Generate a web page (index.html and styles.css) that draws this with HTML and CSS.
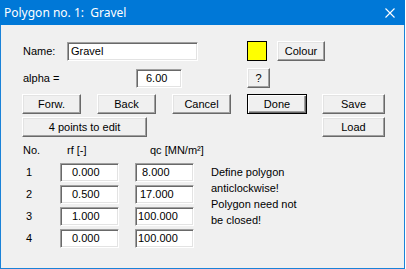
FILE: index.html
```html
<!DOCTYPE html>
<html lang="en">
<head>
<meta charset="UTF-8" />
<title>Polygon no. 1: Gravel</title>
<link rel="stylesheet" href="styles.css">
</head>
<body>

<div class="window">
  <div class="titlebar">
    <span class="title">Polygon no. 1:&nbsp; Gravel</span>
    <svg class="close" width="10" height="10" viewBox="0 0 10 10">
      <path d="M0.5 0.5 L9.5 9.5 M9.5 0.5 L0.5 9.5" stroke="#fff" stroke-width="1.1" fill="none"/>
    </svg>
  </div>

  <div class="client">
    <div class="row row-name">
      <span class="lbl lbl-name">Name:</span>
      <div class="field field-name">Gravel</div>
      <div class="swatch"></div>
      <button class="btn btn-colour">Colour</button>
    </div>

    <div class="row row-alpha">
      <span class="lbl lbl-alpha">alpha =</span>
      <div class="field field-alpha">6.00</div>
      <button class="btn btn-help">?</button>
    </div>

    <div class="row row-actions">
      <button class="btn btn-std">Forw.</button>
      <button class="btn btn-std">Back</button>
      <button class="btn btn-std">Cancel</button>
      <button class="btn btn-std btn-default">Done</button>
      <button class="btn btn-file">Save</button>
    </div>

    <div class="row row-edit">
      <button class="btn btn-points">4 points to edit</button>
      <button class="btn btn-file btn-load">Load</button>
    </div>

    <div class="table-head">
      <span class="col-no">No.</span>
      <span class="col-rf">rf [-]</span>
      <span class="col-qc">qc [MN/m²]</span>
    </div>

    <div class="table-area">
      <div class="points">
        <div class="point">
          <span class="pt-no">1</span>
          <div class="field field-rf">0.000</div>
          <div class="field field-qc short">8.000</div>
        </div>
        <div class="point">
          <span class="pt-no">2</span>
          <div class="field field-rf">0.500</div>
          <div class="field field-qc mid">17.000</div>
        </div>
        <div class="point">
          <span class="pt-no">3</span>
          <div class="field field-rf">1.000</div>
          <div class="field field-qc">100.000</div>
        </div>
        <div class="point">
          <span class="pt-no">4</span>
          <div class="field field-rf">0.000</div>
          <div class="field field-qc">100.000</div>
        </div>
      </div>

      <p class="note">Define polygon<br>anticlockwise!<br>Polygon need not<br>be closed!</p>
    </div>
  </div>
</div>

</body>
</html>
```

FILE: styles.css
```css
* {
  margin: 0;
  padding: 0;
  box-sizing: border-box;
}

body {
  background: #fff;
  font-family: "Liberation Sans", Arial, sans-serif;
  font-size: 11px;
  color: #000;
}

.window {
  width: 405px;
  height: 269px;
  border: 1px solid #1a82d8;
  border-top: none;
  background: #f0f0f0;
  display: flex;
  flex-direction: column;
}

.titlebar {
  height: 25px;
  margin: 0 -1px;
  background: #0078d7;
  color: #fff;
  display: flex;
  align-items: center;
  padding-left: 4px;
}

.title {
  font-family: "Noto Sans", sans-serif;
  font-size: 12px;
  flex: 1;
}

.close {
  margin-right: 10px;
}

.client {
  padding: 16px 0 0 21px;
  display: flex;
  flex-direction: column;
}

.row {
  display: flex;
  align-items: center;
  height: 20px;
}

.row-alpha {
  margin-top: 7px;
}

.row-actions {
  margin-top: 6px;
}

.row-edit {
  margin-top: 3px;
}

.lbl-name {
  width: 45px;
  padding-left: 1px;
}

.lbl-alpha {
  width: 114px;
  padding-left: 1px;
}

/* sunken edit box */
.field {
  height: 19px;
  background: #fff;
  border-top: 1px solid #a0a0a0;
  border-left: 1px solid #a0a0a0;
  border-bottom: 1px solid #fff;
  border-right: 1px solid #fff;
  box-shadow: inset 1px 1px #696969, inset -1px -1px #e3e3e3;
  line-height: 17px;
  white-space: nowrap;
  overflow: hidden;
}

.field-name {
  width: 131px;
  padding-left: 3px;
}

.field-alpha {
  width: 46px;
  padding-left: 9px;
}

.swatch {
  width: 20px;
  height: 20px;
  margin-left: 49px;
  background: #ffff00;
  border: 1px solid #000;
}

/* raised push button */
.btn {
  height: 20px;
  font-family: inherit;
  font-size: 11px;
  color: #000;
  background: #f0f0f0;
  border-top: 1px solid #fff;
  border-left: 1px solid #fff;
  border-bottom: 1px solid #696969;
  border-right: 1px solid #696969;
  box-shadow: inset -1px -1px #a0a0a0, inset 1px 1px #e3e3e3;
  text-align: center;
  line-height: 17px;
}

.btn-colour {
  width: 48px;
  margin-left: 10px;
}

.btn-help {
  width: 23px;
  margin-left: 65px;
}

.btn-std {
  width: 59px;
  margin-right: 16px;
}

.btn-default {
  width: 60px;
  margin-right: 15px;
  border: 1px solid #000;
  box-shadow: inset 1px 1px #fff, inset -1px -1px #696969, inset -2px -2px #a0a0a0;
}

.btn-file {
  width: 63px;
}

.btn-points {
  width: 125px;
}

.btn-load {
  margin-left: 175px;
}

.table-head {
  display: flex;
  margin-top: 7px;
  height: 13px;
  line-height: 13px;
}

.col-no {
  width: 45px;
  padding-left: 1px;
}

.col-rf {
  width: 83px;
}

.table-area {
  display: flex;
  margin-top: 6px;
}

.points {
  display: flex;
  flex-direction: column;
  gap: 3px;
}

.point {
  display: flex;
  align-items: center;
}

.pt-no {
  width: 38px;
  padding-left: 4px;
  margin-top: -2px;
}

.field-rf {
  width: 59px;
  padding-left: 11px;
}

.field-qc {
  width: 59px;
  margin-left: 16px;
  padding-left: 2px;
}

.field-qc.short {
  padding-left: 6px;
}

.field-qc.mid {
  padding-left: 4px;
}

.note {
  margin-left: 17px;
  padding-top: 1px;
  line-height: 16px;
}
```
